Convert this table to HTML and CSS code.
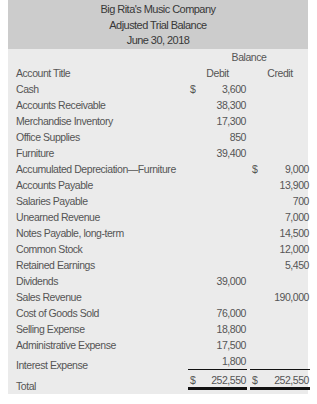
FILE: index.html
```html
<!DOCTYPE html>
<html>
<head>
<meta charset="utf-8">
<link rel="stylesheet" href="styles.css">
</head>
<body>
<div class="sheet">
  <div class="head">
    <div>Big Rita's Music Company</div>
    <div>Adjusted Trial Balance</div>
    <div>June 30, 2018</div>
  </div>
  <div class="body">
    <div class="row"><span></span><span class="span2 center">Balance</span></div>
    <div class="row"><span class="label">Account Title</span><span class="center">Debit</span><span class="center">Credit</span></div>
    <div class="row"><span class="label">Cash</span><span class="amt"><i>$</i><b>3,600</b></span><span></span></div>
    <div class="row"><span class="label">Accounts Receivable</span><span class="amt"><b>38,300</b></span><span></span></div>
    <div class="row"><span class="label">Merchandise Inventory</span><span class="amt"><b>17,300</b></span><span></span></div>
    <div class="row"><span class="label">Office Supplies</span><span class="amt"><b>850</b></span><span></span></div>
    <div class="row"><span class="label">Furniture</span><span class="amt"><b>39,400</b></span><span></span></div>
    <div class="row"><span class="label">Accumulated Depreciation—Furniture</span><span></span><span class="amt"><i>$</i><b>9,000</b></span></div>
    <div class="row"><span class="label">Accounts Payable</span><span></span><span class="amt"><b>13,900</b></span></div>
    <div class="row"><span class="label">Salaries Payable</span><span></span><span class="amt"><b>700</b></span></div>
    <div class="row"><span class="label">Unearned Revenue</span><span></span><span class="amt"><b>7,000</b></span></div>
    <div class="row"><span class="label">Notes Payable, long-term</span><span></span><span class="amt"><b>14,500</b></span></div>
    <div class="row"><span class="label">Common Stock</span><span></span><span class="amt"><b>12,000</b></span></div>
    <div class="row"><span class="label">Retained Earnings</span><span></span><span class="amt"><b>5,450</b></span></div>
    <div class="row"><span class="label">Dividends</span><span class="amt"><b>39,000</b></span><span></span></div>
    <div class="row"><span class="label">Sales Revenue</span><span></span><span class="amt"><b>190,000</b></span></div>
    <div class="row"><span class="label">Cost of Goods Sold</span><span class="amt"><b>76,000</b></span><span></span></div>
    <div class="row"><span class="label">Selling Expense</span><span class="amt"><b>18,800</b></span><span></span></div>
    <div class="row"><span class="label">Administrative Expense</span><span class="amt"><b>17,500</b></span><span></span></div>
    <div class="row"><span class="label low">Interest Expense</span><span class="amt"><b>1,800</b></span><span></span></div>
    <div class="row total"><span class="label">Total</span><span class="amt sum"><i>$</i><b>252,550</b></span><span class="amt sum"><i>$</i><b>252,550</b></span></div>
  </div>
</div>
</body>
</html>
```
FILE: styles.css
```css
html, body {
  margin: 0;
  padding: 0;
  background: #ffffff;
}
body {
  padding: 0 8px;
  font-family: "Liberation Sans", Arial, sans-serif;
}
.sheet {
  width: 300px;
}
.head {
  background: #cccccc;
  color: #383838;
  font-size: 11px;
  letter-spacing: -0.55px;
  text-align: center;
  line-height: 15.5px;
  height: 49px;
  padding-top: 2px;
  box-sizing: border-box;
}
.body {
  background: #ebebeb;
  color: #555555;
  font-size: 10.5px;
  letter-spacing: -0.45px;
  padding-bottom: 1px;
}
.row {
  display: grid;
  grid-template-columns: 177px 59px 60px;
  column-gap: 3px;
  height: 16px;
  line-height: 16px;
}
.label {
  padding-left: 8px;
  white-space: nowrap;
}
.low {
  padding-top: 4px;
}
.center {
  text-align: center;
}
.span2 {
  grid-column: 2 / 4;
}
.amt {
  display: flex;
  justify-content: space-between;
  padding: 0 1px 0 2px;
}
.amt i {
  font-style: normal;
}
.amt b {
  font-weight: normal;
  margin-left: auto;
}
.row.total {
  height: 24px;
  line-height: 18px;
}
.total .label {
  padding-top: 9px;
  line-height: 16px;
}
.sum {
  border-top: 1px solid #111111;
  border-bottom: 3px solid #111111;
  padding-top: 1px;
  box-sizing: content-box;
  height: 16px;
}
```
